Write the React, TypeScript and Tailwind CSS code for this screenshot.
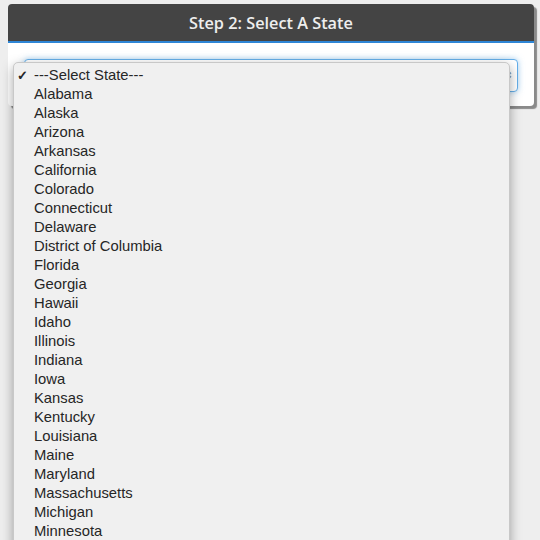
const states = [
  'Alabama', 'Alaska', 'Arizona', 'Arkansas', 'California', 'Colorado', 'Connecticut',
  'Delaware', 'District of Columbia', 'Florida', 'Georgia', 'Hawaii', 'Idaho', 'Illinois',
  'Indiana', 'Iowa', 'Kansas', 'Kentucky', 'Louisiana', 'Maine', 'Maryland',
  'Massachusetts', 'Michigan', 'Minnesota',
]

// ---- Menu nativo aberto (sobreposto ao select) ----
function StateMenu() {
  return (
    <div className="absolute left-[13px] top-[62px] w-[497px] h-[490px] overflow-hidden rounded-t-[5px] bg-[#f0f0f0] border border-[#c8c8c8] shadow-[0_4px_12px_rgba(0,0,0,0.35)] pt-[3px] flex flex-col">
      <div className="flex items-center text-[14.8px] leading-[19px] text-[#262626]">
        <span className="w-[20px] pl-[3px] text-[13px] font-bold">✓</span>
        <span>---Select State---</span>
      </div>
      {states.map(s => (
        <div key={s} className="pl-[20px] text-[14.8px] leading-[19px] text-[#262626]">{s}</div>
      ))}
    </div>
  )
}

export default function App() {
  return (
    <div className="relative h-[540px] overflow-hidden bg-[#eeeeee] pt-1 pl-2 pr-[6px] font-['Liberation_Sans',Arial,sans-serif]">
      <div className="rounded-[4px] bg-white shadow-[3px_3px_1px_#8a8a8a] overflow-hidden">
        <div className="h-[39px] bg-[#444444] flex items-center justify-center border-b-2 border-[#2e86d6]">
          <h2 className="font-['Open_Sans',sans-serif] font-semibold text-[16.3px] text-[#eeeeee] pt-[2px]">
            Step 2: Select A State
          </h2>
        </div>
        <div className="px-4 pt-4 pb-[14px]">
          <div className="h-[33px] rounded-[4px] border border-[#66afe9] bg-white shadow-[0_0_6px_rgba(102,175,233,0.6)] flex items-center justify-end pr-[4px]">
            <span className="text-[11px] text-[#555]">⇳</span>
          </div>
        </div>
      </div>
      <StateMenu />
    </div>
  )
}
